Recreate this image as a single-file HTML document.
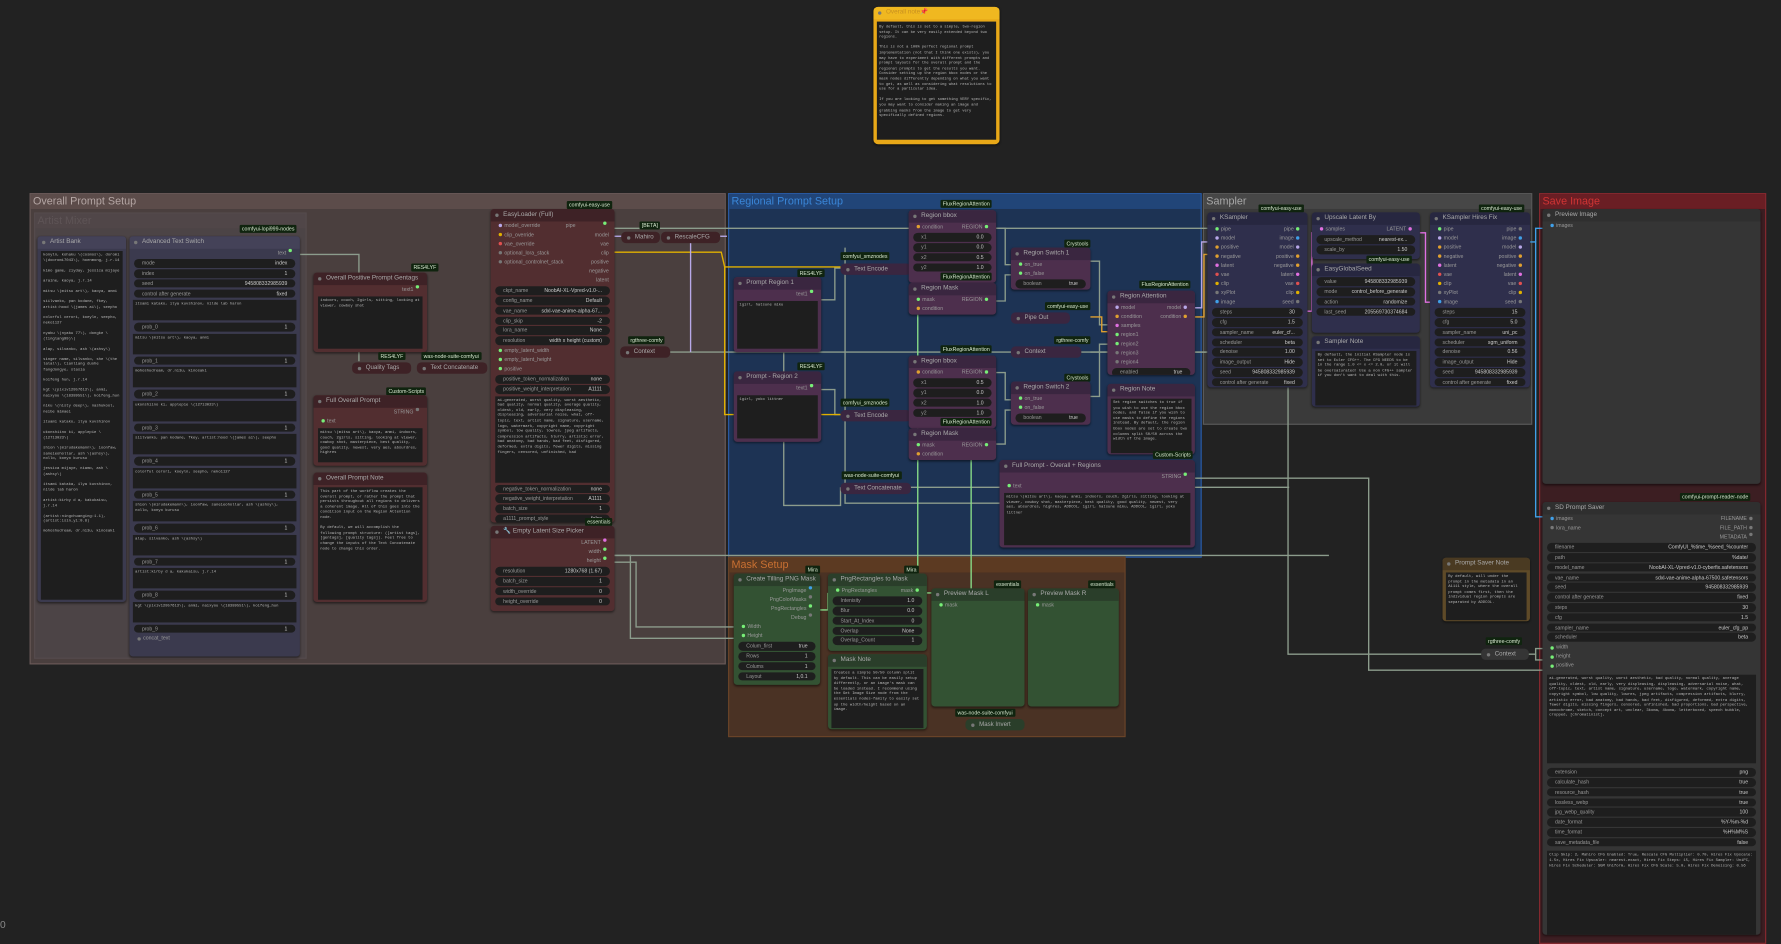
<!DOCTYPE html>
<html><head><meta charset="utf-8"><style>
html,body{margin:0;padding:0;width:1781px;height:942px;overflow:hidden;background:#222222}
#c{position:absolute;left:0;top:0;width:1568px;height:829px;transform:scale(1.13584);transform-origin:0 0;font-family:"Liberation Sans",sans-serif}
.g{position:absolute;border:1px solid}
.g .gt{height:13px;line-height:13px;font-size:9.5px;padding-left:2px}
.n{position:absolute;border-radius:3px;overflow:hidden;color:#9a9a9a;font-size:4.6px;box-shadow:0 1px 2px rgba(0,0,0,.5)}
.n .t{height:11px;line-height:11px;font-size:5.6px;padding-left:11px;color:#aaa;position:relative}
.n .t:before{content:"";position:absolute;left:4px;top:4px;width:3px;height:3px;border-radius:50%;background:#777}
.s{height:8px;line-height:8px;padding:0 5px;display:flex;justify-content:space-between;white-space:nowrap}
.w{margin:1.3px 4px;height:7.5px;line-height:7.5px;border-radius:4px;background:#1e1e1e;padding:0 7px;display:flex;justify-content:space-between;color:#999;white-space:nowrap;overflow:hidden;font-size:4.5px}
.w b{font-weight:normal;color:#ccc}
.ta{background:#1e1e1e;margin:2px 3px;padding:2px;font-family:"Liberation Mono",monospace;font-size:3.4px;line-height:4.6px;color:#b8b8b8;white-space:pre-wrap;overflow:hidden}
.bd{position:absolute;background:#10240f;color:#d8e8d0;font-size:4.6px;padding:0 2px;height:7px;line-height:7px;border-radius:1px;white-space:nowrap}
.cl{position:absolute;height:10px;line-height:10px;border-radius:4px;font-size:5.4px;color:#aaa;padding-left:12px;white-space:nowrap}
.cl:before{content:"";position:absolute;left:5px;top:3.5px;width:3px;height:3px;border-radius:50%;background:#777}
.d{display:inline-block;width:3px;height:3px;border-radius:50%;vertical-align:middle;margin:0 2px}
</style></head><body><div id="c">

<!-- groups -->
<div class="g" style="left:26px;top:170px;width:611px;height:413px;background:#4a3f3e;border-color:#6a5a58"><div class="gt" style="background:#5c4c4a;color:#b4a6a4">Overall Prompt Setup</div></div>
<div class="g" style="left:30px;top:187px;width:238px;height:391px;background:#4c4446;border-color:#554b4d"><div class="gt" style="background:#504648;color:#5e5456">Artist Mixer</div></div>
<div class="g" style="left:641px;top:170px;width:415px;height:319px;background:#1d3354;border-color:#2a5ca8"><div class="gt" style="background:#214578;color:#3a86d8">Regional Prompt Setup</div></div>
<div class="g" style="left:641px;top:490px;width:348px;height:157px;background:#4a3224;border-color:#6a4428"><div class="gt" style="background:#5c3a22;color:#c87032">Mask Setup</div></div>
<div class="g" style="left:1059px;top:170px;width:288px;height:202px;background:#3a3a3a;border-color:#5a5a5a"><div class="gt" style="background:#474747;color:#a8a8a8">Sampler</div></div>
<div class="g" style="left:1355px;top:170px;width:198px;height:659px;background:#3c1e22;border-color:#8a2a30"><div class="gt" style="background:#6a1e24;color:#d03434">Save Image</div></div>

<!-- wires -->
<svg style="position:absolute;left:0;top:0" width="1568" height="829" fill="none" stroke-width="1.2">
<g stroke="#8c9c8c">
<polyline points="264,224 316,224 316,318"/>
<polyline points="541,201 1065,201 1065,205"/>
<polyline points="590,310 1063,310"/>
<polyline points="676,262 690,262 690,445 740,445 740,429"/>
<polyline points="723,264 735,264 735,236 740,236"/>
<polyline points="723,343 735,343 735,365 740,365"/>
<polyline points="744,218 744,443 970,443"/>
<polyline points="800,429 1135,429"/>
<polyline points="1052,421 1205,421 1205,590 1363,590"/>
<polyline points="1134,341 1134,576 1305,576"/>
<polyline points="1345,576 1352,576 1352,571 1363,571"/>
<polyline points="1352,576 1352,581 1363,581"/>
<polyline points="541,489 1170,489"/>
<polyline points="541,495 560,495 560,552 646,552"/>
<polyline points="541,489 555,489 555,562 646,562"/>
<polyline points="877,201 885,201 885,233 892,233"/>
<polyline points="877,265 885,265 885,242 892,242"/>
<polyline points="877,328 885,328 885,352 892,352"/>
<polyline points="877,391 885,391 885,361 892,361"/>
<polyline points="960,230 968,230 968,286 978,286"/>
<polyline points="960,349 968,349 968,303 978,303"/>
<polyline points="960,310 975,310"/>
<polyline points="1052,310 1062,310"/>
<polyline points="800,236 790,236"/>
</g>
<g stroke="#88dd88"><polyline points="808,277 808,530"/><polyline points="855,405 855,530"/><polyline points="722,537 729,537 729,522"/><polyline points="816,522 826,522 826,537"/></g>
<g stroke="#e0b000"><polyline points="541,222 635,222 638,235 740,235"/><polyline points="638,235 638,365 740,365"/><polyline points="802,236 808,236 808,201 810,201"/><polyline points="802,365 808,365 808,328"/></g>
<g stroke="#e0a030"><polyline points="960,279 970,279 970,292 975,292"/><polyline points="1052,279 1060,279 1060,224 1065,224"/></g>
<g stroke="#b8a8e8"><polyline points="541,208 547,208"/><polyline points="634,208 640,208"/><polyline points="608,214 608,310"/><polyline points="1052,271 1058,271 1058,213 1065,213"/></g>
<g stroke="#e070e0"><polyline points="1151,274 1155,274 1155,205 1160,205"/><polyline points="1250,205 1255,205 1255,266 1262,266"/></g>
<g stroke="#40a0e8"><polyline points="1347,213 1352,213 1352,455 1363,455"/><polyline points="1352,213 1352,201 1363,201"/></g>
</svg>

<!-- top note -->
<div class="n" style="left:769px;top:6px;width:111px;height:121px;background:#e8a818;border-radius:4px">
<div class="t" style="background:#f0b820;color:#c89020">Overall note📌</div>
<div class="ta" style="height:100px;margin:2px 3px;font-size:3.3px;line-height:4.6px">By default, this is set to a simple, two-region setup. It can be very easily extended beyond two regions.

This is not a 100% perfect regional prompt implementation (not that I think one exists), you may have to experiment with different prompts and prompt layouts for the overall prompt and the regional prompts to get the results you want. Consider setting up the region bbox nodes or the mask nodes differently depending on what you want to get, as well as considering what resolutions to use for a particular idea.

If you are looking to get something VERY specific, you may want to consider making an image and grabbing masks from the image to get very specifically defined regions.</div></div>

<!-- Artist Bank -->
<div class="bd" style="left:211px;top:198px">comfyui-lopi999-nodes</div>
<div class="n" style="left:33px;top:208px;width:78px;height:322px;background:#3b3a4e"><div class="t" style="background:#444258">Artist Bank</div>
<div class="ta" style="height:303px">konyln, kohaku \(cosmos\), doromi \(dooromi7043\), hoenmong, j.r.14

kimo game, ziyday, jessica mijaye

araine, kaoya, j.r.14

mitsu \(mitsu art\), kaoya, anmi

siilvanko, pan kodane, fkey, artist:hood \(james ai\), seepho

colorful cerori, koeyln, seepho, neko1127

nyabu \(nyabu 77\), dongke \(tinglang99)\)

alap, silvanko, ash \(ashsy\)

singer name, silvanko, she \(the lalal\), tianliang duohe fangdongye, stasia

koifeng hun, j.r.14

kgt \(pixiv12957613\), anmi, naixyou \(18389551\), koifeng_hun

niku \(nisty deep\), nashukool, neibe mimaei

ituami katako, ilya kuvshinov

ukonshiino ki, applepie \(12713023\)

shion \(mirudakemann\), ioonfaw, saneieohollar, ash \(ashsy\), nollo, konyo kurusu

jessica mijaye, niamo, ash \(ashsy\)

itsami kataka, ilya kuvshinov, nilde lab haron

artist:kirby d a, kakukaisu, j.r.14

(artist:ningchuanging:1.1), (artist:isin_yi:0.8)

mohoshudream, dr.ni3u, kinosaki</div></div>

<!-- Advanced Text Switch -->
<div class="n" style="left:114px;top:208px;width:150px;height:370px;background:#3b3a4e"><div class="t" style="background:#444258">Advanced Text Switch</div>
<div class="s" style="justify-content:flex-end">text<span class="d" style="background:#7e7"></span></div>
<div class="w">mode<b>index</b></div><div class="w">index<b>1</b></div><div class="w">seed<b>945808332985939</b></div><div class="w">control after generate<b>fixed</b></div>
<div class="ta" style="height:14px">itsami katako, ilya kuvshinov, nilde lab haron</div><div class="w">prob_0<b>1</b></div>
<div class="ta" style="height:14px">mitsu \(mitsu art\), kaoya, anmi</div><div class="w">prob_1<b>1</b></div>
<div class="ta" style="height:14px">mohoshudream, dr.ni3u, kinosaki</div><div class="w">prob_2<b>1</b></div>
<div class="ta" style="height:14px">ukonshiino ki, applepie \(12713023\)</div><div class="w">prob_3<b>1</b></div>
<div class="ta" style="height:14px">siilvanko, pan kodane, fkey, artist:hood \(james ai\), seepho</div><div class="w">prob_4<b>1</b></div>
<div class="ta" style="height:14px">colorful cerori, koeyln, seepho, neko1127</div><div class="w">prob_5<b>1</b></div>
<div class="ta" style="height:14px">shion \(mirudakemann\), ioonfaw, saneieohollar, ash \(ashsy\), nollo, konyo kurusu</div><div class="w">prob_6<b>1</b></div>
<div class="ta" style="height:14px">alap, silvanko, ash \(ashsy\)</div><div class="w">prob_7<b>1</b></div>
<div class="ta" style="height:14px">artist:kirby d a, kakukaisu, j.r.14</div><div class="w">prob_8<b>1</b></div>
<div class="ta" style="height:14px">kgt \(pixiv12957613\), anmi, naixyou \(18389551\), koifeng_hun</div><div class="w">prob_9<b>1</b></div>
<div class="s"><span><span class="d" style="background:#777"></span>concat_text</span></div></div>

<!-- Overall Positive Prompt Gentags -->
<div class="bd" style="left:362px;top:232px">RES4LYF</div>
<div class="n" style="left:276px;top:240px;width:100px;height:70px;background:#522e30"><div class="t" style="background:#3e2226">Overall Positive Prompt Gentags</div>
<div class="s" style="justify-content:flex-end">text1<span class="d" style="background:#7e7"></span></div>
<div class="ta" style="height:42px;margin:2px 4px">indoors, couch, 2girls, sitting, looking at viewer, cowboy shot</div></div>
<div class="bd" style="left:333px;top:310px">RES4LYF</div>
<div class="bd" style="left:371px;top:310px">was-node-suite-comfyui</div>
<div class="cl" style="left:310px;top:319px;width:40px;background:#3e2226">Quality Tags</div>
<div class="cl" style="left:367px;top:319px;width:50px;background:#3e2226">Text Concatenate</div>
<div class="bd" style="left:340px;top:341px">Custom-Scripts</div>
<div class="n" style="left:276px;top:348px;width:100px;height:62px;background:#522e30"><div class="t" style="background:#3e2226">Full Overall Prompt</div>
<div class="s" style="justify-content:flex-end">STRING<span class="d" style="background:#777"></span></div>
<div class="s"><span><span class="d" style="background:#7e7"></span>text</span></div>
<div class="ta" style="height:26px;margin:2px 4px">mitsu \(mitsu art\), kaoya, anmi, indoors, couch, 2girls, sitting, looking at viewer, cowboy shot, masterpiece, best quality, good quality, newest, very aes, absurdres, highres</div></div>
<div class="n" style="left:276px;top:416px;width:100px;height:114px;background:#522e30"><div class="t" style="background:#3e2226">Overall Prompt Note</div>
<div class="ta" style="height:95px;margin:2px 4px">This part of the workflow creates the overall prompt, or rather the prompt that persists throughout all regions to delivers a coherent image. All of this goes into the condition input on the Region Attention node.

By default, we will accomplish the following prompt structure: ([artist tags], [gentags], [quality tags]). Feel free to change the inputs of the Text Concatenate node to change this order.</div></div>

<!-- EasyLoader -->
<div class="bd" style="left:499px;top:177px">comfyui-easy-use</div>
<div class="n" style="left:432px;top:184px;width:109px;height:276px;background:#522e30"><div class="t" style="background:#3e2226">EasyLoader (Full)</div>
<div class="s"><span><span class="d" style="background:#b8a8e8"></span>model_override</span>pipe<span class="d" style="background:#7e7"></span></div>
<div class="s"><span><span class="d" style="background:#e0b000"></span>clip_override</span>model</div>
<div class="s"><span><span class="d" style="background:#e05050"></span>vae_override</span>vae</div>
<div class="s"><span><span class="d" style="background:#777"></span>optional_lora_stack</span>clip</div>
<div class="s"><span><span class="d" style="background:#777"></span>optional_controlnet_stack</span>positive</div>
<div class="s" style="justify-content:flex-end">negative</div><div class="s" style="justify-content:flex-end">latent</div>
<div class="w">ckpt_name<b>NoobAI-XL-Vpred-v1.0-...</b></div><div class="w">config_name<b>Default</b></div><div class="w">vae_name<b>sdxl-vae-anime-alpha-67...</b></div><div class="w">clip_skip<b>-2</b></div><div class="w">lora_name<b>None</b></div><div class="w">resolution<b>width x height (custom)</b></div>
<div class="s"><span><span class="d" style="background:#7e7"></span>empty_latent_width</span></div><div class="s"><span><span class="d" style="background:#7e7"></span>empty_latent_height</span></div><div class="s"><span><span class="d" style="background:#7e7"></span>positive</span></div>
<div class="w">positive_token_normalization<b>none</b></div><div class="w">positive_weight_interpretation<b>A1111</b></div>
<div class="ta" style="height:72px;margin:2px 4px">ai-generated, worst quality, worst aesthetic, bad quality, normal quality, average quality, oldest, old, early, very displeasing, displeasing, adversarial noise, what, off-topic, text, artist name, signature, username, logo, watermark, copyright name, copyright symbol, low quality, lowres, jpeg artifacts, compression artifacts, blurry, artistic error, bad anatomy, bad hands, bad feet, disfigured, deformed, extra digits, fewer digits, missing fingers, censored, unfinished, bad</div>
<div class="w">negative_token_normalization<b>none</b></div><div class="w">negative_weight_interpretation<b>A1111</b></div><div class="w">batch_size<b>1</b></div><div class="w">a1111_prompt_style<b>false</b></div></div>
<div class="bd" style="left:515px;top:456px">essentials</div>
<div class="n" style="left:432px;top:463px;width:109px;height:75px;background:#522e30"><div class="t" style="background:#3e2226">🔧 Empty Latent Size Picker</div>
<div class="s" style="justify-content:flex-end">LATENT<span class="d" style="background:#e070e0"></span></div><div class="s" style="justify-content:flex-end">width<span class="d" style="background:#7e7"></span></div><div class="s" style="justify-content:flex-end">height<span class="d" style="background:#7e7"></span></div>
<div class="w">resolution<b>1280x768 (1.67)</b></div><div class="w">batch_size<b>1</b></div><div class="w">width_override<b>0</b></div><div class="w">height_override<b>0</b></div></div>
<div class="bd" style="left:563px;top:195px">[BETA]</div>
<div class="cl" style="left:547px;top:204px;width:22px;background:#3e2226">Mahiro</div>
<div class="cl" style="left:582px;top:204px;width:40px;background:#3e2226">RescaleCFG</div>
<div class="bd" style="left:553px;top:296px">rgthree-comfy</div>
<div class="cl" style="left:546px;top:305px;width:32px;background:#3e2226">Context</div>

<!-- Regional -->
<div class="bd" style="left:702px;top:237px">RES4LYF</div>
<div class="n" style="left:646px;top:244px;width:77px;height:66px;background:#4d2f4d"><div class="t" style="background:#3a2640">Prompt Region 1</div>
<div class="s" style="justify-content:flex-end">text1<span class="d" style="background:#7e7"></span></div>
<div class="ta" style="height:38px">1girl, hatsune miku</div></div>
<div class="bd" style="left:702px;top:319px">RES4LYF</div>
<div class="n" style="left:646px;top:327px;width:77px;height:62px;background:#4d2f4d"><div class="t" style="background:#3a2640">Prompt - Region 2</div>
<div class="s" style="justify-content:flex-end">text1<span class="d" style="background:#7e7"></span></div>
<div class="ta" style="height:34px">1girl, yoko littner</div></div>
<div class="bd" style="left:740px;top:222px">comfyui_smznodes</div>
<div class="cl" style="left:740px;top:232px;width:50px;background:#3a2640">Text Encode</div>
<div class="bd" style="left:740px;top:351px">comfyui_smznodes</div>
<div class="cl" style="left:740px;top:361px;width:50px;background:#3a2640">Text Encode</div>
<div class="bd" style="left:741px;top:415px">was-node-suite-comfyui</div>
<div class="cl" style="left:740px;top:425px;width:50px;background:#3a2640">Text Concatenate</div>

<div class="bd" style="left:828px;top:176px">FluxRegionAttention</div>
<div class="n" style="left:800px;top:185px;width:77px;height:64px;background:#4d2f4d"><div class="t" style="background:#3a2640">Region bbox</div>
<div class="s"><span><span class="d" style="background:#e0a030"></span>condition</span><span>REGION<span class="d" style="background:#7e7"></span></span></div>
<div class="w">x1<b>0.0</b></div><div class="w">y1<b>0.0</b></div><div class="w">x2<b>0.5</b></div><div class="w">y2<b>1.0</b></div></div>
<div class="bd" style="left:828px;top:240px">FluxRegionAttention</div>
<div class="n" style="left:800px;top:249px;width:77px;height:28px;background:#4d2f4d"><div class="t" style="background:#3a2640">Region Mask</div>
<div class="s"><span><span class="d" style="background:#7e7"></span>mask</span><span>REGION<span class="d" style="background:#7e7"></span></span></div>
<div class="s"><span><span class="d" style="background:#e0a030"></span>condition</span></div></div>
<div class="bd" style="left:828px;top:304px">FluxRegionAttention</div>
<div class="n" style="left:800px;top:313px;width:77px;height:64px;background:#4d2f4d"><div class="t" style="background:#3a2640">Region bbox</div>
<div class="s"><span><span class="d" style="background:#e0a030"></span>condition</span><span>REGION<span class="d" style="background:#7e7"></span></span></div>
<div class="w">x1<b>0.5</b></div><div class="w">y1<b>0.0</b></div><div class="w">x2<b>1.0</b></div><div class="w">y2<b>1.0</b></div></div>
<div class="bd" style="left:828px;top:368px">FluxRegionAttention</div>
<div class="n" style="left:800px;top:377px;width:77px;height:28px;background:#4d2f4d"><div class="t" style="background:#3a2640">Region Mask</div>
<div class="s"><span><span class="d" style="background:#7e7"></span>mask</span><span>REGION<span class="d" style="background:#7e7"></span></span></div>
<div class="s"><span><span class="d" style="background:#e0a030"></span>condition</span></div></div>

<div class="bd" style="left:937px;top:211px">Crystools</div>
<div class="n" style="left:890px;top:218px;width:70px;height:37px;background:#4d2f4d"><div class="t" style="background:#3a2640">Region Switch 1</div>
<div class="s"><span><span class="d" style="background:#7e7"></span>on_true</span></div><div class="s"><span><span class="d" style="background:#7e7"></span>on_false</span></div>
<div class="w">boolean<b>true</b></div></div>
<div class="bd" style="left:937px;top:329px">Crystools</div>
<div class="n" style="left:890px;top:336px;width:70px;height:38px;background:#4d2f4d"><div class="t" style="background:#3a2640">Region Switch 2</div>
<div class="s"><span><span class="d" style="background:#7e7"></span>on_true</span></div><div class="s"><span><span class="d" style="background:#7e7"></span>on_false</span></div>
<div class="w">boolean<b>true</b></div></div>
<div class="bd" style="left:920px;top:266px">comfyui-easy-use</div>
<div class="cl" style="left:890px;top:275px;width:40px;background:#3a2640">Pipe Out</div>
<div class="bd" style="left:928px;top:296px">rgthree-comfy</div>
<div class="cl" style="left:890px;top:305px;width:50px;background:#3a2640">Context</div>
<div class="bd" style="left:1003px;top:247px">FluxRegionAttention</div>
<div class="n" style="left:975px;top:256px;width:77px;height:74px;background:#4d2f4d"><div class="t" style="background:#3a2640">Region Attention</div>
<div class="s"><span><span class="d" style="background:#b8a8e8"></span>model</span><span>model<span class="d" style="background:#b8a8e8"></span></span></div>
<div class="s"><span><span class="d" style="background:#e0a030"></span>condition</span><span>condition<span class="d" style="background:#e0a030"></span></span></div>
<div class="s"><span><span class="d" style="background:#e070e0"></span>samples</span></div>
<div class="s"><span><span class="d" style="background:#7e7"></span>region1</span></div><div class="s"><span><span class="d" style="background:#7e7"></span>region2</span></div>
<div class="s"><span><span class="d" style="background:#777"></span>region3</span></div><div class="s"><span><span class="d" style="background:#777"></span>region4</span></div>
<div class="w">enabled<b>true</b></div></div>
<div class="n" style="left:975px;top:338px;width:77px;height:62px;background:#4d2f4d"><div class="t" style="background:#3a2640">Region Note</div>
<div class="ta" style="height:44px">Set region switches to true if you wish to use the region bbox nodes, and false if you wish to use masks to define the regions instead. By default, the region bbox nodes are set to create two columns split 50/50 across the width of the image.</div></div>
<div class="bd" style="left:1015px;top:397px">Custom-Scripts</div>
<div class="n" style="left:880px;top:405px;width:172px;height:77px;background:#4d2f4d"><div class="t" style="background:#3a2640">Full Prompt - Overall + Regions</div>
<div class="s" style="justify-content:flex-end">STRING<span class="d" style="background:#7e7"></span></div>
<div class="s"><span><span class="d" style="background:#7e7"></span>text</span></div>
<div class="ta" style="height:42px;margin:2px 4px">mitsu \(mitsu art\), kaoya, anmi, indoors, couch, 2girls, sitting, looking at viewer, cowboy shot, masterpiece, best quality, good quality, newest, very aes, absurdres, highres, ADDCOL, 1girl, hatsune miku, ADDCOL, 1girl, yoko littner</div></div>

<!-- Mask -->
<div class="bd" style="left:709px;top:498px">Mira</div>
<div class="n" style="left:646px;top:505px;width:76px;height:98px;background:#335233"><div class="t" style="background:#2a3e2a">Create Tilling PNG Mask</div>
<div class="s" style="justify-content:flex-end">PngImage<span class="d" style="background:#40a0e8"></span></div><div class="s" style="justify-content:flex-end">PngColorMasks<span class="d" style="background:#777"></span></div><div class="s" style="justify-content:flex-end">PngRectangles<span class="d" style="background:#7e7"></span></div><div class="s" style="justify-content:flex-end">Debug<span class="d" style="background:#777"></span></div>
<div class="s"><span><span class="d" style="background:#7e7"></span>Width</span></div><div class="s"><span><span class="d" style="background:#7e7"></span>Height</span></div>
<div class="w">Colum_first<b>true</b></div><div class="w">Rows<b>1</b></div><div class="w">Colums<b>1</b></div><div class="w">Layout<b>1,0.1</b></div></div>
<div class="bd" style="left:796px;top:498px">Mira</div>
<div class="n" style="left:729px;top:505px;width:87px;height:68px;background:#335233"><div class="t" style="background:#2a3e2a">PngRectangles to Mask</div>
<div class="s"><span><span class="d" style="background:#7e7"></span>PngRectangles</span><span>mask<span class="d" style="background:#7e7"></span></span></div>
<div class="w">Intenisity<b>1.0</b></div><div class="w">Blur<b>0.0</b></div><div class="w">Start_At_Index<b>0</b></div><div class="w">Overlap<b>None</b></div><div class="w">Overlap_Count<b>1</b></div></div>
<div class="n" style="left:729px;top:576px;width:87px;height:66px;background:#335233"><div class="t" style="background:#2a3e2a">Mask Note</div>
<div class="ta" style="height:48px">Creates a simple 50/50 column split by default. This can be easily setup differently, or an image's mask can be loaded instead. I recommend using the Get Image Size node from the essentials nodes-family to easily set up the width/height based on an image.</div></div>
<div class="bd" style="left:875px;top:511px">essentials</div>
<div class="n" style="left:820px;top:518px;width:82px;height:104px;background:#335233"><div class="t" style="background:#2a3e2a">Preview Mask L</div>
<div class="s"><span><span class="d" style="background:#7e7"></span>mask</span></div></div>
<div class="bd" style="left:958px;top:511px">essentials</div>
<div class="n" style="left:905px;top:518px;width:80px;height:104px;background:#335233"><div class="t" style="background:#2a3e2a">Preview Mask R</div>
<div class="s"><span><span class="d" style="background:#7e7"></span>mask</span></div></div>
<div class="bd" style="left:841px;top:624px">was-node-suite-comfyui</div>
<div class="cl" style="left:850px;top:633px;width:40px;background:#2a3e2a">Mask Invert</div>

<!-- Sampler -->
<div class="bd" style="left:1108px;top:180px">comfyui-easy-use</div>
<div class="n" style="left:1063px;top:187px;width:88px;height:154px;background:#2f2f4c"><div class="t" style="background:#272740">KSampler</div>
<div class="s"><span><span class="d" style="background:#7e7"></span>pipe</span><span>pipe<span class="d" style="background:#7e7"></span></span></div>
<div class="s"><span><span class="d" style="background:#b8a8e8"></span>model</span><span>image<span class="d" style="background:#40a0e8"></span></span></div>
<div class="s"><span><span class="d" style="background:#e0a030"></span>positive</span><span>model<span class="d" style="background:#b8a8e8"></span></span></div>
<div class="s"><span><span class="d" style="background:#e0a030"></span>negative</span><span>positive<span class="d" style="background:#e0a030"></span></span></div>
<div class="s"><span><span class="d" style="background:#e070e0"></span>latent</span><span>negative<span class="d" style="background:#e0a030"></span></span></div>
<div class="s"><span><span class="d" style="background:#e05050"></span>vae</span><span>latent<span class="d" style="background:#e070e0"></span></span></div>
<div class="s"><span><span class="d" style="background:#e0b000"></span>clip</span><span>vae<span class="d" style="background:#e05050"></span></span></div>
<div class="s"><span><span class="d" style="background:#777"></span>xyPlot</span><span>clip<span class="d" style="background:#e0b000"></span></span></div>
<div class="s"><span><span class="d" style="background:#40a0e8"></span>image</span><span>seed<span class="d" style="background:#777"></span></span></div>
<div class="w">steps<b>30</b></div><div class="w">cfg<b>1.5</b></div><div class="w">sampler_name<b>euler_cf...</b></div><div class="w">scheduler<b>beta</b></div><div class="w">denoise<b>1.00</b></div><div class="w">image_output<b>Hide</b></div><div class="w">seed<b>945808332985939</b></div><div class="w">control after generate<b>fixed</b></div></div>
<div class="n" style="left:1155px;top:187px;width:95px;height:41px;background:#2f2f4c"><div class="t" style="background:#272740">Upscale Latent By</div>
<div class="s"><span><span class="d" style="background:#e070e0"></span>samples</span><span>LATENT<span class="d" style="background:#e070e0"></span></span></div>
<div class="w">upscale_method<b>nearest-ex...</b></div><div class="w">scale_by<b>1.50</b></div></div>
<div class="bd" style="left:1203px;top:225px">comfyui-easy-use</div>
<div class="n" style="left:1155px;top:232px;width:95px;height:61px;background:#2f2f4c"><div class="t" style="background:#272740">EasyGlobalSeed</div>
<div class="w">value<b>945808332985939</b></div><div class="w">mode<b>control_before_generate</b></div><div class="w">action<b>randomize</b></div><div class="w">last_seed<b>205569730374684</b></div></div>
<div class="n" style="left:1155px;top:296px;width:95px;height:62px;background:#2f2f4c"><div class="t" style="background:#272740">Sampler Note</div>
<div class="ta" style="height:44px">By default, the initial KSampler node is set to Euler CFG++. The CFG NEEDS to be in the range 1.0 <= x <= 2.0, or it will be oversaturated! Use a non CFG++ sampler if you don't want to deal with this.</div></div>
<div class="bd" style="left:1302px;top:180px">comfyui-easy-use</div>
<div class="n" style="left:1259px;top:187px;width:88px;height:154px;background:#2f2f4c"><div class="t" style="background:#272740">KSampler Hires Fix</div>
<div class="s"><span><span class="d" style="background:#7e7"></span>pipe</span><span>pipe<span class="d" style="background:#777"></span></span></div>
<div class="s"><span><span class="d" style="background:#b8a8e8"></span>model</span><span>image<span class="d" style="background:#40a0e8"></span></span></div>
<div class="s"><span><span class="d" style="background:#e0a030"></span>positive</span><span>model<span class="d" style="background:#b8a8e8"></span></span></div>
<div class="s"><span><span class="d" style="background:#e0a030"></span>negative</span><span>positive<span class="d" style="background:#e0a030"></span></span></div>
<div class="s"><span><span class="d" style="background:#e070e0"></span>latent</span><span>negative<span class="d" style="background:#e0a030"></span></span></div>
<div class="s"><span><span class="d" style="background:#e05050"></span>vae</span><span>latent<span class="d" style="background:#e070e0"></span></span></div>
<div class="s"><span><span class="d" style="background:#e0b000"></span>clip</span><span>vae<span class="d" style="background:#e05050"></span></span></div>
<div class="s"><span><span class="d" style="background:#777"></span>xyPlot</span><span>clip<span class="d" style="background:#e0b000"></span></span></div>
<div class="s"><span><span class="d" style="background:#40a0e8"></span>image</span><span>seed<span class="d" style="background:#777"></span></span></div>
<div class="w">steps<b>15</b></div><div class="w">cfg<b>5.0</b></div><div class="w">sampler_name<b>uni_pc</b></div><div class="w">scheduler<b>sgm_uniform</b></div><div class="w">denoise<b>0.56</b></div><div class="w">image_output<b>Hide</b></div><div class="w">seed<b>945808332985939</b></div><div class="w">control after generate<b>fixed</b></div></div>

<!-- Prompt Saver Note / context -->
<div class="n" style="left:1270px;top:491px;width:77px;height:56px;background:#5e4a28"><div class="t" style="background:#4a3a22">Prompt Saver Note</div>
<div class="ta" style="height:38px">By default, will under the prompt in the metadata in an A1111 style, where the overall prompt comes first, then the individual region prompts are separated by ADDCOL.</div></div>
<div class="bd" style="left:1308px;top:561px">rgthree-comfy</div>
<div class="cl" style="left:1304px;top:571px;width:30px;background:#353535">Context</div>

<!-- Save -->
<div class="n" style="left:1358px;top:184px;width:192px;height:242px;background:#353535"><div class="t" style="background:#2f2f2f">Preview Image</div>
<div class="s"><span><span class="d" style="background:#40a0e8"></span>images</span></div></div>
<div class="bd" style="left:1479px;top:434px">comfyui-prompt-reader-node</div>
<div class="n" style="left:1358px;top:442px;width:192px;height:381px;background:#353535"><div class="t" style="background:#2f2f2f">SD Prompt Saver</div>
<div class="s"><span><span class="d" style="background:#40a0e8"></span>images</span><span>FILENAME<span class="d" style="background:#777"></span></span></div>
<div class="s"><span><span class="d" style="background:#777"></span>lora_name</span><span>FILE_PATH<span class="d" style="background:#777"></span></span></div>
<div class="s" style="justify-content:flex-end">METADATA<span class="d" style="background:#777"></span></div>
<div class="w">filename<b>ComfyUI_%time_%seed_%counter</b></div><div class="w">path<b>%date/</b></div><div class="w">model_name<b>NoobAI-XL-Vpred-v1.0-cyberfix.safetensors</b></div><div class="w">vae_name<b>sdxl-vae-anime-alpha-67500.safetensors</b></div><div class="w">seed<b>945808332985939</b></div><div class="w">control after generate<b>fixed</b></div><div class="w">steps<b>30</b></div><div class="w">cfg<b>1.5</b></div><div class="w">sampler_name<b>euler_cfg_pp</b></div><div class="w">scheduler<b>beta</b></div>
<div class="s"><span><span class="d" style="background:#7e7"></span>width</span></div><div class="s"><span><span class="d" style="background:#7e7"></span>height</span></div><div class="s"><span><span class="d" style="background:#7e7"></span>positive</span></div>
<div class="ta" style="height:74px;margin:4px 4px">ai-generated, worst quality, worst aesthetic, bad quality, normal quality, average quality, oldest, old, early, very displeasing, displeasing, adversarial noise, what, off-topic, text, artist name, signature, username, logo, watermark, copyright name, copyright symbol, low quality, lowres, jpeg artifacts, compression artifacts, blurry, artistic error, bad anatomy, bad hands, bad feet, disfigured, deformed, extra digits, fewer digits, missing fingers, censored, unfinished, bad proportions, bad perspective, monochrome, sketch, concept art, unclear, 3koma, 4koma, letterboxed, speech bubble, cropped, [chromatinist],</div>
<div class="w">extension<b>png</b></div><div class="w">calculate_hash<b>true</b></div><div class="w">resource_hash<b>true</b></div><div class="w">lossless_webp<b>true</b></div><div class="w">jpg_webp_quality<b>100</b></div><div class="w">date_format<b>%Y-%m-%d</b></div><div class="w">time_format<b>%H%M%S</b></div><div class="w">save_metadata_file<b>false</b></div>
<div class="ta" style="height:80px;margin:4px 4px">Clip Skip: 2, Mahiro CFG Enabled: True, Rescale CFG Multiplier: 0.70, Hires Fix Upscale: 1.5x, Hires Fix Upscaler: nearest-exact, Hires Fix Steps: 15, Hires Fix Sampler: UniPC, Hires Fix Scheduler: SGM Uniform, Hires Fix CFG Scale: 5.0, Hires Fix Denoising: 0.56</div></div>

<div style="position:absolute;left:-3px;top:785px;color:#888;font-size:9px">]</div>
<div style="position:absolute;left:-5px;top:809px;color:#888;font-size:9px">00</div>
</div></body></html>
